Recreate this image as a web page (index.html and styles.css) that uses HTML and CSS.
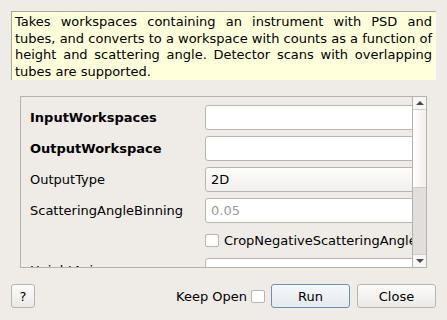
FILE: index.html
```html
<!DOCTYPE html>
<html lang="en">
<head>
  <meta charset="UTF-8">
  <title>Algorithm dialog</title>
  <link rel="stylesheet" href="styles.css">
</head>
<body>
  <div class="dialog">
    <!-- algorithm summary -->
    <div class="description">
      <p>
        <span class="line">Takes workspaces containing an instrument with PSD and</span>
        <span class="line">tubes, and converts to a workspace with counts as a function of</span>
        <span class="line">height and scattering angle. Detector scans with overlapping</span>
        <span class="line last">tubes are supported.</span>
      </p>
    </div>

    <!-- property list -->
    <div class="props">
      <div class="props-view">
        <div class="prop-grid">
          <label class="prop-label bold">InputWorkspaces</label>
          <div class="field"></div>

          <label class="prop-label bold">OutputWorkspace</label>
          <div class="field"></div>

          <label class="prop-label">OutputType</label>
          <div class="field combo">2D</div>

          <label class="prop-label">ScatteringAngleBinning</label>
          <div class="field placeholder">0.05</div>

          <span></span>
          <div class="check-row"><span class="checkbox"></span>CropNegativeScatteringAngles</div>

          <label class="prop-label">HeightAxis</label>
          <div class="field"></div>
        </div>
      </div>
      <div class="scrollbar">
        <div class="sb-btn"><span class="arrow up"></span></div>
        <div class="sb-handle"></div>
        <div class="sb-track"></div>
        <div class="sb-btn"><span class="arrow down"></span></div>
      </div>
    </div>

    <!-- dialog buttons -->
    <div class="buttons">
      <button class="btn help">?</button>
      <div class="keep-open">Keep Open <span class="checkbox"></span></div>
      <button class="btn wide default">Run</button>
      <button class="btn wide">Close</button>
    </div>
  </div>
</body>
</html>
```

FILE: styles.css
```css
* {
  margin: 0;
  padding: 0;
  box-sizing: border-box;
}
html, body {
  width: 100%;
  height: 100%;
  background-color: #efebe7;
  overflow: hidden;
  font-family: "DejaVu Sans", sans-serif;
  font-size: 13px;
  color: #000;
}
.dialog {
  display: flex;
  flex-direction: column;
  padding: 11px 11px 0 11px;
}

.description {
  height: 69px;
  background: #ffffdc;
  border-left: 1px solid #a8a5a1;
  border-top: 1px solid #a8a5a1;
  padding: 2px 4px 0 3px;
}
.description p {
  line-height: 16.5px;
}
.line {
  display: block;
  white-space: nowrap;
  text-align: justify;
  text-align-last: justify;
}
.line.last {
  text-align-last: left;
}

.props {
  display: flex;
  height: 172px;
  margin: 16px 9px 0 9px;
}
.props-view {
  flex: 1;
  overflow: hidden;
  border: 1px solid #b5b2ae;
  border-right: none;
  padding: 8px 0 0 9px;
}
.prop-grid {
  display: grid;
  grid-template-columns: 175px 240px;
  grid-template-rows: 25px 25px 25px 25px 23px 25px;
  row-gap: 6px;
  align-items: center;
}
.prop-label {
  white-space: nowrap;
}
.bold {
  font-weight: bold;
}
.field {
  height: 25px;
  background: #fff;
  border: 1px solid #b8b5b1;
  border-radius: 3px;
  padding: 0 5px;
  line-height: 23px;
}
.combo {
  background: linear-gradient(#fdfdfc, #f1efed);
}
.placeholder {
  color: #9a9a9a;
}
.check-row {
  display: flex;
  align-items: center;
  gap: 5px;
  white-space: nowrap;
}
.checkbox {
  display: inline-block;
  width: 14px;
  height: 13px;
  background: #fff;
  border: 1px solid #b8b5b1;
  border-radius: 2px;
}

.scrollbar {
  width: 15px;
  display: flex;
  flex-direction: column;
  border: 1px solid #b5b2ae;
  background: #fafaf9;
}
.sb-btn {
  height: 13px;
  display: flex;
  justify-content: center;
  align-items: center;
  background: #f7f6f5;
}
.sb-btn:first-child {
  border-bottom: 1px solid #d2cfcb;
}
.sb-btn:last-child {
  border-top: 1px solid #d2cfcb;
}
.sb-handle {
  height: 78px;
  background: linear-gradient(90deg, #ffffff, #f1efed);
  border-bottom: 1px solid #cfccc8;
}
.sb-track {
  flex: 1;
  background: #e1dfdc;
}
.arrow {
  width: 0;
  height: 0;
  border-left: 4px solid transparent;
  border-right: 4px solid transparent;
}
.arrow.up {
  border-bottom: 4px solid #4a4a4a;
}
.arrow.down {
  border-top: 4px solid #4a4a4a;
}

.buttons {
  display: flex;
  align-items: center;
  margin-top: 16px;
  height: 24px;
}
.btn {
  height: 24px;
  font-family: "DejaVu Sans", sans-serif;
  font-size: 13px;
  color: #000;
  border: 1px solid #b8b5b1;
  border-radius: 3px;
  background: linear-gradient(#fbfbfa, #ebe9e6);
}
.help {
  width: 24px;
}
.wide {
  width: 79px;
  margin-left: 7px;
}
.default {
  margin-left: 6px;
  border-color: #6f8fae;
  background: linear-gradient(#f7f9fb, #e4e9ee);
}
.keep-open {
  margin-left: auto;
  display: flex;
  align-items: center;
  gap: 4px;
}
```
